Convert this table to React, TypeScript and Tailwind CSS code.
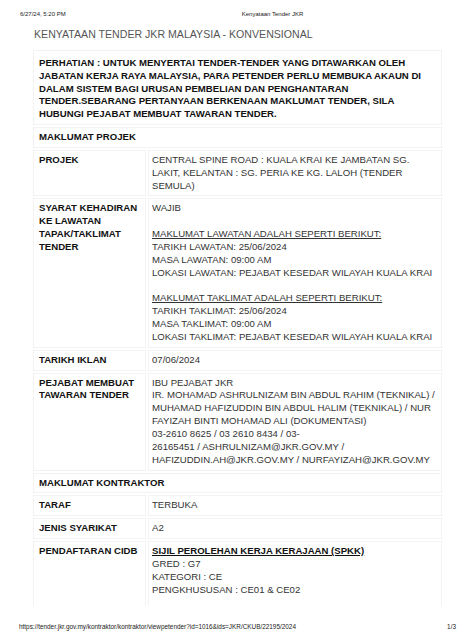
import type { ReactNode } from "react";

type Line = { text: string; u?: boolean; b?: boolean };

const font = { fontFamily: '"Liberation Sans", Arial, sans-serif' };

function Lines({ lines }: { lines: (string | Line)[] }) {
    return (
        <>
            {lines.map((l, i) => {
                const x = typeof l === "string" ? { text: l } : l;
                return (
                    <div
                        key={i}
                        className={"whitespace-nowrap " + (x.u ? "underline " : "") + (x.b ? "font-bold text-[#111]" : "")}
                    >
                        {x.text || "\u00a0"}
                    </div>
                );
            })}
        </>
    );
}

function Cell({ children, className = "" }: { children: ReactNode; className?: string }) {
    return (
        <div className={"border-[1px] border-solid border-[#f3f3f3] py-[3px] " + className}>
            {children}
        </div>
    );
}

function Row({ label, value }: { label: string[]; value: (string | Line)[] }) {
    return (
        <div className="grid grid-cols-[113px_1fr] gap-[2px]">
            <Cell className="px-[5px] font-bold text-[#111]">
                <Lines lines={label} />
            </Cell>
            <Cell className="pl-[3px] pr-[5px] text-[#333]">
                <Lines lines={value} />
            </Cell>
        </div>
    );
}

function Heading({ children }: { children: ReactNode }) {
    return <Cell className="px-[5px] font-bold text-[#111]">{children}</Cell>;
}

export default function App() {
    return (
        <div className="w-[474px] h-[632px] bg-white overflow-hidden" style={font}>
            {/* halaman */}
            <div className="h-[606px] overflow-hidden">
                <div className="flex items-center pt-[10px] pl-[20px] text-[6px] text-[#222]">
                    <span>6/27/24, 5:20 PM</span>
                    <span className="ml-[176px]">Kenyataan Tender JKR</span>
                </div>

                <div className="pl-[34px] pt-[8px] text-[10.6px] text-[#555]">
                    KENYATAAN TENDER JKR MALAYSIA - KONVENSIONAL
                </div>

                <div className="mt-[7px] mx-[33px] w-[409px] flex flex-col gap-[2px] text-[9.6px] leading-[12.85px]">
                    <Cell className="px-[5px] font-bold text-[#111] pt-[6px] pb-[3px]">
                        <Lines
                            lines={[
                                "PERHATIAN : UNTUK MENYERTAI TENDER-TENDER YANG DITAWARKAN OLEH",
                                "JABATAN KERJA RAYA MALAYSIA, PARA PETENDER PERLU MEMBUKA AKAUN DI",
                                "DALAM SISTEM BAGI URUSAN PEMBELIAN DAN PENGHANTARAN",
                                "TENDER.SEBARANG PERTANYAAN BERKENAAN MAKLUMAT TENDER, SILA",
                                "HUBUNGI PEJABAT MEMBUAT TAWARAN TENDER.",
                            ]}
                        />
                    </Cell>

                    <Heading>MAKLUMAT PROJEK</Heading>

                    <Row
                        label={["PROJEK"]}
                        value={[
                            "CENTRAL SPINE ROAD : KUALA KRAI KE JAMBATAN SG.",
                            "LAKIT, KELANTAN : SG. PERIA KE KG. LALOH (TENDER",
                            "SEMULA)",
                        ]}
                    />

                    <Row
                        label={["SYARAT KEHADIRAN", "KE LAWATAN", "TAPAK/TAKLIMAT", "TENDER"]}
                        value={[
                            "WAJIB",
                            "",
                            { text: "MAKLUMAT LAWATAN ADALAH SEPERTI BERIKUT:", u: true },
                            "TARIKH LAWATAN: 25/06/2024",
                            "MASA LAWATAN: 09:00 AM",
                            "LOKASI LAWATAN: PEJABAT KESEDAR WILAYAH KUALA KRAI",
                            "",
                            { text: "MAKLUMAT TAKLIMAT ADALAH SEPERTI BERIKUT:", u: true },
                            "TARIKH TAKLIMAT: 25/06/2024",
                            "MASA TAKLIMAT: 09:00 AM",
                            "LOKASI TAKLIMAT: PEJABAT KESEDAR WILAYAH KUALA KRAI",
                        ]}
                    />

                    <Row label={["TARIKH IKLAN"]} value={["07/06/2024"]} />

                    <Row
                        label={["PEJABAT MEMBUAT", "TAWARAN TENDER"]}
                        value={[
                            "IBU PEJABAT JKR",
                            "IR. MOHAMAD ASHRULNIZAM BIN ABDUL RAHIM (TEKNIKAL) /",
                            "MUHAMAD HAFIZUDDIN BIN ABDUL HALIM (TEKNIKAL) / NUR",
                            "FAYIZAH BINTI MOHAMAD ALI (DOKUMENTASI)",
                            "03-2610 8625 / 03 2610 8434 / 03-",
                            "26165451 / ASHRULNIZAM@JKR.GOV.MY /",
                            "HAFIZUDDIN.AH@JKR.GOV.MY / NURFAYIZAH@JKR.GOV.MY",
                        ]}
                    />

                    <Heading>MAKLUMAT KONTRAKTOR</Heading>

                    <Row label={["TARAF"]} value={["TERBUKA"]} />

                    <Row label={["JENIS SYARIKAT"]} value={["A2"]} />

                    <Row
                        label={["PENDAFTARAN CIDB"]}
                        value={[
                            { text: "SIJIL PEROLEHAN KERJA KERAJAAN (SPKK)", u: true, b: true },
                            "GRED : G7",
                            "KATEGORI : CE",
                            "PENGKHUSUSAN : CE01 & CE02",
                            "",
                            "",
                        ]}
                    />
                </div>
            </div>

            {/* footer cetakan */}
            <div className="flex items-center justify-between pl-[19px] pr-[18px] pt-[16px] text-[6.4px] text-[#222]">
                <span>https://tender.jkr.gov.my/kontraktor/kontraktor/viewpetender?id=1016&amp;ids=JKR/CKUB/22195/2024</span>
                <span>1/3</span>
            </div>
        </div>
    );
}
